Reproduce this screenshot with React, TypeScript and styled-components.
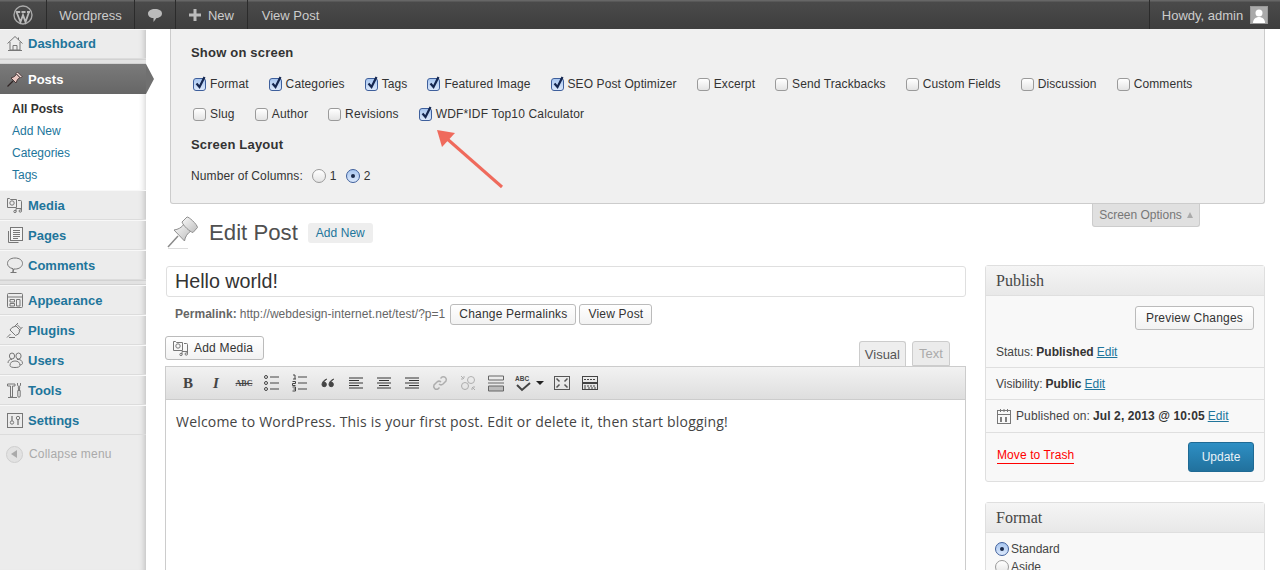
import React from "react";
import styled, { createGlobalStyle } from "styled-components";

const Global = createGlobalStyle`
  html, body {
    margin: 0;
    padding: 0;
    height: 570px;
    overflow: hidden;
    background: #fff;
    font-family: "Liberation Sans", Arial, sans-serif;
    font-size: 12px;
    color: #333;
  }
  * { box-sizing: border-box; }
`;

const AdminBar = styled.header`
  display: flex;
  justify-content: space-between;
  height: 29px;
  background: linear-gradient(#666 0, #666 1px, #4a4a4a 2px, #3e3e3e 100%);
  color: #ccc;
  font-size: 13px;
`;

const BarGroup = styled.div`
  display: flex;
`;

const BarItem = styled.div<{ $w: number; $right?: boolean; $plain?: boolean }>`
  display: flex;
  align-items: center;
  justify-content: center;
  gap: 7px;
  width: ${(p) => p.$w}px;
  padding-top: 1px;
  border-right: ${(p) => (p.$right || p.$plain ? "none" : "1px solid #2b2b2b")};
  border-left: ${(p) => (p.$right ? "1px solid #2b2b2b" : "none")};
`;

const Avatar = styled.span`
  display: flex;
  width: 18px;
  height: 18px;
  background: #aaa;
  border: 1px solid #999;
  overflow: hidden;
`;

const Page = styled.div`
  display: flex;
  height: 541px;
  overflow: hidden;
`;

const Sidebar = styled.nav`
  position: relative;
  z-index: 2;
  flex: 0 0 146px;
  background: #ececec;
  box-shadow: inset -7px 0 6px -6px rgba(0, 0, 0, 0.22);
`;

const MenuItem = styled.div<{ $lift?: number }>`
  display: flex;
  align-items: center;
  gap: 5px;
  height: 30px;
  padding: 0 0 ${(p) => p.$lift ?? 0}px 7px;
  font-size: 13px;
  font-weight: 700;
  color: #21759b;
  border-bottom: 1px solid #dcdcdc;
  border-top: 1px solid #f8f8f8;
`;

const Separator = styled.div<{ $h: number }>`
  height: ${(p) => p.$h}px;
  background: #e2e2e2;
  border-top: 1px solid #d2d2d2;
  border-bottom: 1px solid #d2d2d2;
`;

const ActiveItem = styled.div`
  position: relative;
  display: flex;
  align-items: center;
  gap: 5px;
  height: 30px;
  padding-left: 7px;
  font-size: 13px;
  font-weight: 700;
  color: #fff;
  background: linear-gradient(#7a7a7a, #666);
  &::after {
    content: "";
    position: absolute;
    left: 146px;
    top: 0;
    border-style: solid;
    border-width: 15px 0 15px 8px;
    border-color: transparent transparent transparent #707070;
  }
`;

const SubMenu = styled.div`
  display: flex;
  flex-direction: column;
  gap: 6px;
  height: 96px;
  padding: 7px 0 0 12px;
  background: #fff;
  box-shadow: inset -7px 0 6px -6px rgba(0, 0, 0, 0.2);
`;

const SubLink = styled.div<{ $current?: boolean }>`
  height: 16px;
  line-height: 16px;
  color: ${(p) => (p.$current ? "#333" : "#21759b")};
  font-weight: ${(p) => (p.$current ? 700 : 400)};
`;

const Collapse = styled.div`
  display: flex;
  align-items: center;
  gap: 6px;
  height: 38px;
  padding-left: 6px;
  color: #aaa;
  letter-spacing: 0.2px;
`;

const CollapseDot = styled.span`
  display: flex;
  align-items: center;
  justify-content: center;
  width: 17px;
  height: 17px;
  border-radius: 50%;
  background: #e2e2e2;
  border: 1px solid #cfcfcf;
`;

const Main = styled.main`
  position: relative;
  flex: 1;
  min-width: 0;
`;

const ScreenPanel = styled.section`
  position: relative;
  height: 175px;
  margin: 0 15px 0 24px;
  padding: 16px 20px 0 20px;
  background: #f0f0f0;
  border: 1px solid #ccc;
  border-top: none;
  border-radius: 0 0 3px 3px;
`;

const PanelHeading = styled.h5<{ $top?: number }>`
  margin: ${(p) => p.$top ?? 0}px 0 0;
  font-size: 13px;
  line-height: 16px;
  font-weight: 700;
  letter-spacing: 0.2px;
`;

const OptionRow = styled.div<{ $top: number; $track: number }>`
  display: flex;
  align-items: center;
  gap: 20px;
  height: 16px;
  margin: ${(p) => p.$top}px 0 0 2px;
  letter-spacing: ${(p) => p.$track}px;
`;

const Option = styled.label`
  display: flex;
  align-items: center;
  gap: 4px;
  white-space: nowrap;
`;

const Box = styled.span<{ $on?: boolean }>`
  position: relative;
  flex: none;
  width: 13px;
  height: 13px;
  border-radius: 3px;
  border: 1px solid ${(p) => (p.$on ? "#3e5f9c" : "#9a9a9a")};
  background: ${(p) =>
    p.$on
      ? "linear-gradient(#a9c7f0, #dbe8fb)"
      : "linear-gradient(#fff, #e4e4e4)"};
`;

const Tick = styled.svg`
  position: absolute;
  left: 0;
  top: -4px;
  width: 13px;
  height: 15px;
`;

const Radio = styled.span<{ $on?: boolean }>`
  display: flex;
  align-items: center;
  justify-content: center;
  flex: none;
  width: 14px;
  height: 14px;
  border-radius: 50%;
  border: 1px solid ${(p) => (p.$on ? "#3e5f9c" : "#9a9a9a")};
  background: ${(p) =>
    p.$on
      ? "linear-gradient(#a9c7f0, #dbe8fb)"
      : "linear-gradient(#fff, #e4e4e4)"};
  &::after {
    content: "";
    display: ${(p) => (p.$on ? "block" : "none")};
    width: 4px;
    height: 4px;
    border-radius: 50%;
    background: #1a2a4a;
  }
`;

const ColumnsRow = styled.div`
  display: flex;
  align-items: center;
  gap: 5px;
  height: 16px;
  margin-top: 15px;
  letter-spacing: 0.1px;
`;

const ColumnChoice = styled.span`
  display: flex;
  align-items: center;
  gap: 4px;
  margin-left: 4px;
`;

const Arrow = styled.svg`
  position: absolute;
  left: 290px;
  top: 100px;
`;

const ScreenTab = styled.div`
  position: absolute;
  right: 80px;
  top: 175px;
  display: flex;
  align-items: center;
  justify-content: center;
  gap: 5px;
  width: 108px;
  height: 23px;
  background: #e0e0e0;
  border: 1px solid #ccc;
  border-top: none;
  border-radius: 0 0 3px 3px;
  color: #777;
`;

const TabCaret = styled.span`
  width: 0;
  height: 0;
  border-style: solid;
  border-width: 0 3.5px 6px 3.5px;
  border-color: transparent transparent #aaa transparent;
`;

const HeadingRow = styled.div`
  display: flex;
  align-items: center;
  height: 36px;
  margin: 11px 0 0 21px;
`;

const Title = styled.h2`
  margin: 0 10px 0 10px;
  font-size: 22.2px;
  font-weight: 400;
  color: #505050;
`;

const AddNew = styled.span`
  padding: 3px 8px;
  background: #eee;
  border-radius: 3px;
  color: #21759b;
  letter-spacing: 0.05px;
`;

const Columns = styled.div`
  display: flex;
  gap: 19px;
  margin: 15px 0 0 20px;
`;

const LeftColumn = styled.div`
  flex: 0 0 800px;
`;

const RightColumn = styled.aside`
  flex: 0 0 280px;
  display: flex;
  flex-direction: column;
  gap: 20px;
  margin-top: -1px;
`;

const TitleInput = styled.div`
  display: flex;
  align-items: center;
  height: 31px;
  padding-left: 8px;
  border: 1px solid #dfdfdf;
  border-radius: 3px;
  font-size: 19.7px;
  color: #333;
`;

const Permalink = styled.div`
  display: flex;
  align-items: center;
  gap: 3px;
  height: 22px;
  margin: 6px 0 0 9px;
  color: #666;
  letter-spacing: 0.03px;
`;

const PermalinkUrl = styled.span`
  margin-right: 2px;
`;

const Button = styled.button`
  display: inline-flex;
  align-items: center;
  justify-content: center;
  gap: 5px;
  height: 21px;
  padding: 0 8px;
  background: linear-gradient(#fff, #f2f2f2);
  border: 1px solid #bbb;
  border-radius: 3px;
  color: #333;
  font: 12px "Liberation Sans", Arial, sans-serif;
  letter-spacing: 0.2px;
`;

const EditorTop = styled.div`
  display: flex;
  align-items: flex-end;
  justify-content: space-between;
  height: 41px;
  margin: 0 16px 0 -1px;
`;

const MediaButton = styled(Button)`
  height: 24px;
  margin-bottom: 6px;
  padding: 0 10px 0 7px;
`;

const Tabs = styled.div`
  display: flex;
  gap: 6px;
`;

const Tab = styled.div<{ $active?: boolean }>`
  display: flex;
  align-items: center;
  justify-content: center;
  height: 25px;
  padding: 0 5px;
  min-width: 38px;
  margin-bottom: ${(p) => (p.$active ? "-1px" : "0")};
  background: ${(p) => (p.$active ? "#eee" : "#ebebeb")};
  border: 1px solid #ccc;
  border-bottom: ${(p) => (p.$active ? "none" : "1px solid #ccc")};
  border-radius: 3px 3px 0 0;
  color: ${(p) => (p.$active ? "#555" : "#aaa")};
  font-size: 13px;
`;

const Editor = styled.div`
  width: 801px;
  height: 210px;
  margin-left: -1px;
  border: 1px solid #ccc;
`;

const Toolbar = styled.div`
  display: flex;
  align-items: center;
  height: 33px;
  padding-left: 8px;
  background: linear-gradient(#f2f2f2, #dedede);
  border-bottom: 1px solid #ccc;
`;

const ToolButton = styled.span<{ $w?: number; $faded?: boolean }>`
  display: flex;
  align-items: center;
  justify-content: center;
  gap: 4px;
  width: ${(p) => p.$w ?? 28}px;
  height: 20px;
  opacity: ${(p) => (p.$faded ? 0.35 : 1)};
  color: #444;
`;

const SerifGlyph = styled.span<{ $italic?: boolean }>`
  font-family: "Liberation Serif", serif;
  font-size: 15px;
  font-weight: 700;
  font-style: ${(p) => (p.$italic ? "italic" : "normal")};
`;

const StrikeGlyph = styled.span`
  font-family: "Liberation Serif", serif;
  font-size: 8px;
  font-weight: 700;
  text-decoration: line-through;
`;

const Content = styled.p`
  margin: 0;
  padding: 12px 10px;
  font-family: "Open Sans", sans-serif;
  font-size: 14px;
  line-height: 19px;
  letter-spacing: 0.2px;
  color: #444;
`;

const MetaBox = styled.section<{ $h: number }>`
  height: ${(p) => p.$h}px;
  background: #f8f8f8;
  border: 1px solid #dfdfdf;
  border-radius: 3px;
`;

const MetaHead = styled.h3`
  display: flex;
  align-items: center;
  height: 30px;
  margin: 0;
  padding-left: 10px;
  background: linear-gradient(#f5f5f5, #e8e8e8);
  border-bottom: 1px solid #dfdfdf;
  font-family: "Liberation Serif", serif;
  font-size: 16px;
  font-weight: 400;
  color: #464646;
`;

const PreviewRow = styled.div`
  display: flex;
  justify-content: flex-end;
  padding: 10px 10px 0 0;
`;

const PreviewButton = styled(Button)`
  height: 24px;
  width: 119px;
`;

const MetaRow = styled.div<{ $h: number; $pad?: number; $spread?: boolean }>`
  display: flex;
  align-items: center;
  gap: 3px;
  height: ${(p) => p.$h}px;
  padding: ${(p) => p.$pad ?? 0}px 0 0 10px;
  border-bottom: 1px solid #dfdfdf;
  color: #444;
  letter-spacing: ${(p) => (p.$spread ? "0.1px" : "0")};
  b { color: #333; }
  a { color: #21759b; text-decoration: underline; }
`;

const ActionRow = styled.div`
  display: flex;
  align-items: center;
  justify-content: space-between;
  height: 47px;
  padding: 0 10px 0 11px;
`;

const Trash = styled.span`
  margin-bottom: 2px;
  padding-bottom: 1px;
  color: #f00;
  border-bottom: 1px solid #f00;
  letter-spacing: 0.1px;
`;

const UpdateButton = styled.button`
  width: 66px;
  height: 30px;
  background: linear-gradient(#2e8fc4, #21719d);
  border: 1px solid #1f6a94;
  border-radius: 3px;
  color: #e8f2f8;
  font: 12px "Liberation Sans", Arial, sans-serif;
`;

const FormatList = styled.div`
  display: flex;
  flex-direction: column;
  gap: 5px;
  padding: 9px 0 0 9px;
`;

const FormatItem = styled.div`
  display: flex;
  align-items: center;
  gap: 2px;
  height: 13px;
  color: #444;
`;

const MenuIcon = styled.svg`
  flex: none;
  width: 16px;
  height: 16px;
  fill: none;
  stroke: #777;
  stroke-width: 1;
  overflow: visible;
`;

const ToolIcon = styled.svg`
  width: 18px;
  height: 18px;
  fill: none;
  stroke: #444;
  stroke-width: 1;
`;

const icons: Record<string, React.ReactNode> = {
  home: <path d="M0.500 8.500 8 1.500l7.500 7M3 7v8h10V7M6 15v-4.500h4V15M11.500 2.500V5M1 15.500h14" />,
  media: (
    <>
      <path d="M0.500 1.500h2l1 1h6v8h-9z" />
      <circle cx="5" cy="6" r="2.200" />
      <path d="M11 3.500h2.500a1 1 0 0 1 1 1V8M14.500 8v5.500M9 11.500h5.500M9 11.500v3" />
      <circle cx="8" cy="14.500" r="1.200" />
      <circle cx="13.300" cy="14" r="1.200" />
    </>
  ),
  pages: (
    <>
      <path d="M1.500 4v11.500h10" />
      <rect x="3.500" y="0.500" width="12" height="13" fill="#f4f4f4" />
      <path d="M6 3.500h7M6 5.500h7M6 7.500h7M6 9.500h7M6 11.500h5" />
    </>
  ),
  comments: (
    <path d="M8 1c4.500 0 7.500 2.300 7.500 5.500S12 12 8.500 12H6.800l-.8 3v-3.300C2.500 11 .5 9 .5 6.500.5 3.300 3.500 1 8 1zM3.500 15.500h6" />
  ),
  appearance: (
    <>
      <rect x="0.500" y="1.500" width="15" height="14" rx="1" />
      <path d="M.5 5h15M3 7.500h4.500v2.500H3zM3 11.500h4.500V14H3zM9.500 7.500h3.500V14H9.500z" />
    </>
  ),
  plugins: (
    <path d="M0 15.500 3.500 12M3 8l5.500 5.500 3-1.500 1.500-4L9 4l-4 1.500zM7.500 4.500 11 1M12 8.500l3.500-3.500M10 2.500 14 6.500M2 15.500h6" />
  ),
  users: (
    <>
      <ellipse cx="5" cy="4" rx="2.600" ry="3" />
      <ellipse cx="11.500" cy="4" rx="2.600" ry="3" />
      <path d="M1 11c0-2.500 2-4 4-3.500M10 7.500c3-.5 5.500 1 5.500 4 0 1-2 1.500-3.500 1.500" />
      <path d="M3 13.500c0-3 2-4.500 5-4.500s5 1.500 5 4.500c0 1.500-2.500 2-5 2s-5-.5-5-2z" fill="#ececec" />
    </>
  ),
  tools: (
    <path d="M.5 2h7.500v2h-2.500v11h-2V4H.5zM10.500 1v2.500l1.500 1 1.500-1V1M11.300 4.500l.2 4h1l.2-4M10.800 8.500h2.400v5.500a1.200 1.200 0 0 1-2.400 0zM1 15.500h9" />
  ),
  settings: (
    <>
      <rect x="0.500" y="1.500" width="15" height="14" />
      <circle cx="5" cy="10.500" r="1.700" />
      <circle cx="11" cy="6" r="1.700" />
      <path d="M5 4v4.800M11 7.700V13" strokeWidth="1.300" />
    </>
  ),
};

const menuTop = [
  { key: "media", label: "Media" },
  { key: "pages", label: "Pages" },
  { key: "comments", label: "Comments" },
];

const menuBottom = [
  { key: "appearance", label: "Appearance" },
  { key: "plugins", label: "Plugins" },
  { key: "users", label: "Users" },
  { key: "tools", label: "Tools" },
  { key: "settings", label: "Settings" },
];

const rowOne: [string, boolean][] = [
  ["Format", true],
  ["Categories", true],
  ["Tags", true],
  ["Featured Image", true],
  ["SEO Post Optimizer", true],
  ["Excerpt", false],
  ["Send Trackbacks", false],
  ["Custom Fields", false],
  ["Discussion", false],
  ["Comments", false],
];

const rowTwo: [string, boolean][] = [
  ["Slug", false],
  ["Author", false],
  ["Revisions", false],
  ["WDF*IDF Top10 Calculator", true],
];

function Check({ on }: { on: boolean }) {
  return (
    <Box $on={on}>
      {on && (
        <Tick viewBox="0 0 13 15">
          <path d="M2.500 8.500 5.500 12 10.500 2" fill="none" stroke="#14264f" strokeWidth="2.200" />
        </Tick>
      )}
    </Box>
  );
}

function Options({ items, top, track }: { items: [string, boolean][]; top: number; track: number }) {
  return (
    <OptionRow $top={top} $track={track}>
      {items.map(([label, on]) => (
        <Option key={label}>
          <Check on={on} />
          {label}
        </Option>
      ))}
    </OptionRow>
  );
}

function MediaGlyph() {
  return <MenuIcon viewBox="0 0 16 16">{icons.media}</MenuIcon>;
}

function Lines({ kind }: { kind: "left" | "center" | "right" }) {
  const rows = [14, 10, 14, 10, 14];
  return (
    <ToolIcon viewBox="0 0 18 18">
      {rows.map((w, i) => {
        const x = kind === "left" ? 2 : kind === "center" ? 9 - w / 2 : 16 - w;
        const y = 4 + i * 2.5;
        return <path key={i} d={`M${x} ${y}h${w}`} stroke="#333" />;
      })}
    </ToolIcon>
  );
}

export default function App() {
  return (
    <>
      <Global />
      <AdminBar>
        <BarGroup>
          <BarItem $w={47}>
            <svg width="20" height="20" viewBox="0 0 20 20">
              <circle cx="10" cy="10" r="9" fill="none" stroke="#aaa" strokeWidth="1.400" />
              <path d="M3.500 7 7.500 17 10 10 12.500 17 16 7M2.800 7h4.400M8.500 7h4M14 7h3" fill="none" stroke="#bbb" strokeWidth="1.800" />
            </svg>
          </BarItem>
          <BarItem $w={88}>Wordpress</BarItem>
          <BarItem $w={41}>
            <svg width="16" height="15" viewBox="0 0 16 15">
              <path d="M8 1c4 0 7 1.600 7 4.500S12 10 9.500 10L6.500 14V10C3 10 1 8 1 5.500S4 1 8 1z" fill="#bbb" />
            </svg>
          </BarItem>
          <BarItem $w={72}>
            <svg width="12" height="12" viewBox="0 0 12 12">
              <path d="M6 0v12M0 6h12" stroke="#bbb" strokeWidth="3" />
            </svg>
            New
          </BarItem>
          <BarItem $w={85} $plain>View Post</BarItem>
        </BarGroup>
        <BarGroup>
          <BarItem $w={131} $right>
            Howdy, admin
            <Avatar>
              <svg width="16" height="16" viewBox="0 0 16 16">
                <circle cx="8" cy="6" r="3.500" fill="#fff" />
                <path d="M2 16c0-4 3-6 6-6s6 2 6 6z" fill="#fff" />
              </svg>
            </Avatar>
          </BarItem>
        </BarGroup>
      </AdminBar>
      <Page>
        <Sidebar>
          <MenuItem $lift={2}>
            <MenuIcon viewBox="0 0 16 16">{icons.home}</MenuIcon>
            Dashboard
          </MenuItem>
          <Separator $h={5} />
          <ActiveItem>
            <MenuIcon viewBox="0 0 16 16">
              <path d="M0.500 15.500 6 10" stroke="#2f2424" strokeWidth="1.300" />
              <path d="M4 7l5 5 1.500-3.500L13 6.500 9.500 3 7.500 5.500z" fill="#e8c6c0" stroke="#4a3a3a" />
              <path d="M9 2.500l4.500 4.500 1.500-1.500L10.500 1z" fill="#f3dcd8" stroke="#4a3a3a" />
            </MenuIcon>
            Posts
          </ActiveItem>
          <SubMenu>
            <SubLink $current>All Posts</SubLink>
            <SubLink>Add New</SubLink>
            <SubLink>Categories</SubLink>
            <SubLink>Tags</SubLink>
          </SubMenu>
          {menuTop.map((m) => (
            <MenuItem key={m.key}>
              <MenuIcon viewBox="0 0 16 16">{icons[m.key]}</MenuIcon>
              {m.label}
            </MenuItem>
          ))}
          <Separator $h={5} />
          {menuBottom.map((m) => (
            <MenuItem key={m.key}>
              <MenuIcon viewBox="0 0 16 16">{icons[m.key]}</MenuIcon>
              {m.label}
            </MenuItem>
          ))}
          <Collapse>
            <CollapseDot>
              <svg width="7" height="8" viewBox="0 0 7 8">
                <path d="M6 0v8L0 4z" fill="#aaa" />
              </svg>
            </CollapseDot>
            Collapse menu
          </Collapse>
        </Sidebar>
        <Main>
          <ScreenPanel>
            <PanelHeading>Show on screen</PanelHeading>
            <Options items={rowOne} top={15} track={0.1} />
            <Options items={rowTwo} top={14} track={0.17} />
            <PanelHeading $top={15}>Screen Layout</PanelHeading>
            <ColumnsRow>
              Number of Columns:
              <ColumnChoice>
                <Radio />1
              </ColumnChoice>
              <ColumnChoice>
                <Radio $on />2
              </ColumnChoice>
            </ColumnsRow>
          </ScreenPanel>
          <Arrow width="70" height="62" viewBox="0 0 70 62">
            <path d="M66 58 9 8" stroke="#ef6a5c" strokeWidth="3" fill="none" />
            <path d="M1 1 19 4 6 18z" fill="#ef6a5c" />
          </Arrow>
          <ScreenTab>
            Screen Options
            <TabCaret />
          </ScreenTab>
          <HeadingRow>
            <svg width="32" height="34" viewBox="0 0 32 34">
              <defs>
                <linearGradient id="pinMetal" x1="0" y1="0" x2="1" y2="1">
                  <stop offset="0" stopColor="#fafafa" />
                  <stop offset="1" stopColor="#bdbdbd" />
                </linearGradient>
              </defs>
              <path d="M1 31 11 20" stroke="#8a8a8a" strokeWidth="1.500" />
              <path d="M1 32.500h20" stroke="#ddd" />
              <path d="M7 14c4-.5 8-2.500 10-6l7 7c-3.500 2-6 6-6.500 10z" fill="url(#pinMetal)" stroke="#8f8f8f" />
              <path d="M15 6l5-5c1.500-.5 10 7 10.500 10.500l-4.500 5c-3-.5-10-7-11-10.500z" fill="url(#pinMetal)" stroke="#8f8f8f" />
            </svg>
            <Title>Edit Post</Title>
            <AddNew>Add New</AddNew>
          </HeadingRow>
          <Columns>
            <LeftColumn>
              <TitleInput>Hello world!</TitleInput>
              <Permalink>
                <b>Permalink:</b>
                <PermalinkUrl>http://webdesign-internet.net/test/?p=1</PermalinkUrl>
                <Button>Change Permalinks</Button>
                <Button>View Post</Button>
              </Permalink>
              <EditorTop>
                <MediaButton>
                  <MediaGlyph />
                  Add Media
                </MediaButton>
                <Tabs>
                  <Tab $active>Visual</Tab>
                  <Tab>Text</Tab>
                </Tabs>
              </EditorTop>
              <Editor>
                <Toolbar>
                  <ToolButton><SerifGlyph>B</SerifGlyph></ToolButton>
                  <ToolButton><SerifGlyph $italic>I</SerifGlyph></ToolButton>
                  <ToolButton><StrikeGlyph>ABC</StrikeGlyph></ToolButton>
                  <ToolButton>
                    <ToolIcon viewBox="0 0 18 18">
                      <circle cx="3" cy="3" r="1.500" />
                      <circle cx="3" cy="9" r="1.500" />
                      <circle cx="3" cy="15" r="1.500" />
                      <path d="M7 3h9M7 9h9M7 15h9" />
                    </ToolIcon>
                  </ToolButton>
                  <ToolButton>
                    <ToolIcon viewBox="0 0 18 18">
                      <path d="M2 1h2v4M2 5h3M1.500 7.500h3v2h-3v2h3M1.500 13h3v4h-3M2.500 15h2M7 3h9M7 9h9M7 15h9" />
                    </ToolIcon>
                  </ToolButton>
                  <ToolButton>
                    <ToolIcon viewBox="0 0 18 18">
                      <path d="M8 5C5 6 3 8 3 10.500a2.200 2.200 0 1 0 4.400 0A2.200 2.200 0 0 0 5 8.300M15 5c-3 1-5 3-5 5.500a2.200 2.200 0 1 0 4.400 0 2.200 2.200 0 0 0-2.400-2.200" fill="#444" />
                    </ToolIcon>
                  </ToolButton>
                  <ToolButton><Lines kind="left" /></ToolButton>
                  <ToolButton><Lines kind="center" /></ToolButton>
                  <ToolButton><Lines kind="right" /></ToolButton>
                  <ToolButton $faded>
                    <ToolIcon viewBox="0 0 18 18">
                      <path d="M8 10a3 3 0 0 0 4 0l3-3a3 3 0 0 0-4-4L9.500 4.500M10 8a3 3 0 0 0-4 0l-3 3a3 3 0 0 0 4 4l1.500-1.500" strokeWidth="1.500" />
                    </ToolIcon>
                  </ToolButton>
                  <ToolButton $faded>
                    <ToolIcon viewBox="0 0 18 18">
                      <circle cx="12" cy="6" r="3.500" />
                      <circle cx="6" cy="12" r="3.500" />
                      <path d="M2 2l3 3M5 2v2M2 5h2M16 16l-3-3M13 16v-2M16 13h-2" />
                    </ToolIcon>
                  </ToolButton>
                  <ToolButton>
                    <ToolIcon viewBox="0 0 18 18">
                      <path d="M1.500 2h15v4h-15zM1 9h16" stroke="#666" />
                      <path d="M1.500 12h15v5h-15z" fill="#bbb" stroke="#666" />
                    </ToolIcon>
                  </ToolButton>
                  <ToolButton $w={38}>
                    <ToolIcon viewBox="0 0 18 18">
                      <text x="1" y="7" fontSize="6.500" fontWeight="700" fontFamily="Liberation Sans" fill="#444" stroke="none">ABC</text>
                      <path d="M3 11l5 5 8-7" strokeWidth="2" />
                    </ToolIcon>
                    <svg width="8" height="4" viewBox="0 0 8 4">
                      <path d="M0 0h8L4 4z" fill="#222" />
                    </svg>
                  </ToolButton>
                  <ToolButton>
                    <ToolIcon viewBox="0 0 18 18">
                      <rect x="1.500" y="2.500" width="15" height="13" stroke="#555" />
                      <path d="M3.500 4.500l3 3M3.500 13.500l3-3M14.500 4.500l-3 3M14.500 13.500l-3-3" stroke="#555" strokeWidth="1.500" />
                    </ToolIcon>
                  </ToolButton>
                  <ToolButton>
                    <ToolIcon viewBox="0 0 18 18">
                      <rect x="1.500" y="2.500" width="15" height="6" />
                      <rect x="1.500" y="9.500" width="15" height="6" />
                      <path d="M3 5.500h12M3 12h12M3 14h3M7 14h8" strokeDasharray="2 1" />
                    </ToolIcon>
                  </ToolButton>
                </Toolbar>
                <Content>
                  Welcome to WordPress. This is your first post. Edit or delete it, then start blogging!
                </Content>
              </Editor>
            </LeftColumn>
            <RightColumn>
              <MetaBox $h={217}>
                <MetaHead>Publish</MetaHead>
                <PreviewRow>
                  <PreviewButton>Preview Changes</PreviewButton>
                </PreviewRow>
                <MetaRow $h={38} $pad={6}>
                  Status: <b>Published</b> <a>Edit</a>
                </MetaRow>
                <MetaRow $h={32}>
                  Visibility: <b>Public</b> <a>Edit</a>
                </MetaRow>
                <MetaRow $h={33} $spread>
                  <svg width="16" height="16" viewBox="0 0 16 16" style={{ marginRight: 1 }}>
                    <rect x="1.500" y="2.500" width="13" height="13" fill="none" stroke="#777" />
                    <path d="M1.500 6.500h13M4.500 1v3M8 1v3M11.500 1v3" stroke="#777" />
                    <path d="M5 9v5M10 9v5" stroke="#555" strokeWidth="1.500" />
                  </svg>
                  Published on: <b>Jul 2, 2013 @ 10:05</b> <a>Edit</a>
                </MetaRow>
                <ActionRow>
                  <Trash>Move to Trash</Trash>
                  <UpdateButton>Update</UpdateButton>
                </ActionRow>
              </MetaBox>
              <MetaBox $h={100}>
                <MetaHead>Format</MetaHead>
                <FormatList>
                  <FormatItem><Radio $on />Standard</FormatItem>
                  <FormatItem><Radio />Aside</FormatItem>
                </FormatList>
              </MetaBox>
            </RightColumn>
          </Columns>
        </Main>
      </Page>
    </>
  );
}
